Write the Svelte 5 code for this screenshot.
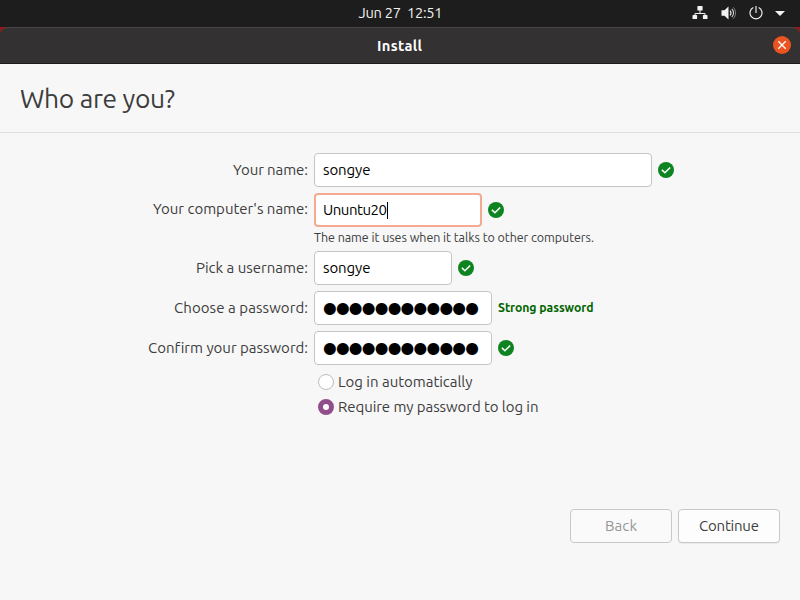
<script>
  const masked = '●'.repeat(12);
  const rows = [
    { label: 'Your name:', lw: 75, value: 'songye', vw: 47.5, width: 338, check: true },
    { label: "Your computer's name:", lw: 155, value: 'Ununtu20', vw: 64, width: 168, check: true, focus: true,
      hint: 'The name it uses when it talks to other computers.' },
    { label: 'Pick a username:', lw: 112, value: 'songye', vw: 47.5, width: 138, check: true },
    { label: 'Choose a password:', lw: 134, value: masked, vw: 156, width: 178, secret: true, strength: 'Strong password' },
    { label: 'Confirm your password:', lw: 159.5, value: masked, vw: 156, width: 178, secret: true, check: true }
  ];
  let login = $state('require');

  // Tracks the text so that it spans the given number of pixels.
  function fit(node, width) {
    const gap = (width - node.getBoundingClientRect().width) / (node.textContent.length - 1);
    node.style.letterSpacing = `${gap}px`;
    node.style.marginRight = `${-gap}px`;
  }
</script>

<div class="screen">
  <header class="panel">
    <time class="t" use:fit={85}>Jun 27&nbsp; 12:51</time>
    <div class="tray">
      <svg class="net" width="16" height="14" viewBox="0 0 16 14">
        <path d="M8 4v4M3 9.500V7.500h10v2" fill="none" stroke="#f2f2f2" stroke-width="1" />
        <path d="M6 0h4a.6.6 0 0 1 .6.6v3.300a.6.6 0 0 1-.6.6H6a.6.6 0 0 1-.6-.6V.6A.6.6 0 0 1 6 0zM1.100 9h3.400a.6.6 0 0 1 .6.6v2.900a.6.6 0 0 1-.6.6H1.100a.6.6 0 0 1-.6-.6V9.600a.6.6 0 0 1 .6-.6zM11.500 9h3.400a.6.6 0 0 1 .6.6v2.900a.6.6 0 0 1-.6.6h-3.400a.6.6 0 0 1-.6-.6V9.600a.6.6 0 0 1 .6-.6z" fill="#f2f2f2" />
      </svg>
      <svg class="vol" width="16" height="14" viewBox="0 0 16 14">
        <path d="M.5 4.300h3L7.500.500v13L3.500 9.700h-3z" fill="#f2f2f2" />
        <path d="M9 4.600c1.300 1.300 1.300 3.500 0 4.800" fill="none" stroke="#f2f2f2" stroke-width="1.200" />
        <path d="M10.800 2.800c2.300 2.300 2.300 6.100 0 8.400" fill="none" stroke="#d0d0d0" stroke-width="1.100" />
        <path d="M12.300 1.300c3 3.300 3 8.100 0 11.400" fill="none" stroke="#888" stroke-width=".9" />
      </svg>
      <svg class="power" width="14" height="14" viewBox="0 0 14 14">
        <path d="M4.300 1.500a6 6 0 1 0 5.400 0M7 0v7" fill="none" stroke="#f2f2f2" stroke-width="1.150" />
      </svg>
      <svg class="arrow" width="10" height="5" viewBox="0 0 10 5"><path d="M0 0h10L5 5z" fill="#f2f2f2" /></svg>
    </div>
  </header>

  <div class="titleback">
    <div class="titlebar">
      <strong class="t" use:fit={45}>Install</strong>
      <button class="close" aria-label="Close">
        <svg width="18" height="18" viewBox="0 0 18 18">
          <circle cx="9" cy="9" r="9" fill="#e95420" />
          <path d="M5.300 5.300l7.400 7.400M12.700 5.300l-7.400 7.400" stroke="#fff" stroke-width="1.300" />
        </svg>
      </button>
    </div>
  </div>

  <div class="heading"><h1 class="t" use:fit={155}>Who are you?</h1></div>

  <main>
    {#each rows as row}
      <div class="row" class:active={row.focus}>
        <span class="label"><span class="t" use:fit={row.lw}>{row.label}</span></span>
        <div class="entry" class:focus={row.focus} style:width="{row.width}px">
          <span class="t" class:secret={row.secret} use:fit={row.vw}>{row.value}</span>
          {#if row.focus}<i class="caret"></i>{/if}
        </div>
        {#if row.check}
          <svg class="check" width="16" height="16" viewBox="0 0 16 16">
            <circle cx="8" cy="8" r="8" fill="#0e8420" />
            <path d="M3.900 7.900l3 2.900 5.300-5.300" fill="none" stroke="#fff" stroke-width="1.500" />
          </svg>
        {/if}
        {#if row.strength}<strong class="strength t" use:fit={95.5}>{row.strength}</strong>{/if}
      </div>
      {#if row.hint}<div class="hint"><span class="t" use:fit={280}>{row.hint}</span></div>{/if}
    {/each}

    <div class="choices">
      <button class="choice" onclick={() => (login = 'auto')}>
        <i class="radio" class:on={login === 'auto'}></i><span class="t" use:fit={134.5}>Log in automatically</span>
      </button>
      <button class="choice" onclick={() => (login = 'require')}>
        <i class="radio" class:on={login === 'require'}></i><span class="t" use:fit={200.5}>Require my password to log in</span>
      </button>
    </div>
  </main>

  <footer>
    <button class="btn" disabled><span class="t" use:fit={32}>Back</span></button>
    <button class="btn"><span class="t" use:fit={60}>Continue</span></button>
  </footer>
</div>

<style>
  :global(body) { margin: 0; }
  * { box-sizing: border-box; }
  .screen {
    width: 800px; height: 600px; overflow: hidden;
    display: flex; flex-direction: column;
    background: #f7f7f7; color: #3d3d3d;
    font: 15px/18px Ubuntu, "Noto Sans", sans-serif;
  }
  .t { display: inline-block; white-space: pre; flex: none; }
  button { font: inherit; color: inherit; border: 0; padding: 0; margin: 0; background: none; }
  svg { display: block; flex: none; }

  .panel {
    height: 27px; padding-bottom: 1px; background: #1d1d1d; color: #f2f2f2;
    display: grid; grid-template-columns: 1fr auto 1fr; align-items: center;
  }
  .panel time { grid-column: 2; font-size: 14.667px; padding-left: 1px; }
  .tray { display: flex; align-items: center; justify-content: flex-end; padding-right: 15px; }
  .vol { margin-left: 13px; }
  .power { margin-left: 12px; }
  .arrow { margin: 1px 0 0 12px; }

  .titleback { height: 37px; background: #a01010; flex: none; }
  .titlebar {
    height: 37px; background: #333132; color: #fff;
    border-top: 1px solid #484647; border-bottom: 1px solid #1d1b1c;
    border-radius: 7px 7px 0 0;
    display: grid; grid-template-columns: 1fr auto 1fr; align-items: center;
  }
  .titlebar strong { grid-column: 2; font-size: 14.667px; margin-left: -1px; }
  .close { justify-self: end; margin: 0 9px 1px 0; }

  .heading { height: 69px; flex: none; border-bottom: 1px solid #dedede; padding: 16px 20px 0; }
  h1 { margin: 0; font-size: 26.400px; line-height: 36px; font-weight: 400; }

  main { padding-top: 20px; flex: 1; }
  .row { display: flex; align-items: center; gap: 6px; height: 34px; margin-bottom: 6px; }
  .label { width: 308px; display: flex; justify-content: flex-end; }
  .active .label { padding-bottom: 2px; }
  .entry {
    height: 34px; border: 1px solid #c4c4c4; border-radius: 4px; background: #fff; color: #000;
    display: flex; align-items: center; padding-left: 8px; flex: none;
  }
  .entry.focus { border: 2px solid #f4aa90; padding-left: 7px; }
  .secret { font-family: "DejaVu Sans", sans-serif; font-size: 15.700px; }
  .caret { width: 1px; height: 17px; background: #000; }
  .strength { color: #006400; font-size: 12.222px; }
  .hint { height: 18px; margin: -5px 0 5px 314px; font-size: 12.500px; line-height: 18px; }

  .choices { padding: 0 0 0 318px; }
  .choice { display: flex; align-items: center; gap: 4px; height: 22px; margin-bottom: 3px; text-align: left; }
  .radio { width: 16px; height: 16px; border-radius: 50%; border: 1px solid #bdbdbd; background: #fff; flex: none; }
  .radio.on { border: 5.500px solid #924d8b; }

  footer { display: flex; justify-content: flex-end; gap: 6px; padding: 0 20px 57px; }
  .btn {
    width: 102px; height: 34px; border: 1px solid #c8c8c8; border-radius: 4px; background: #fdfdfd;
    display: flex; align-items: center; justify-content: center;
    box-shadow: 0 1px 1px rgba(0, 0, 0, .06);
  }
  .btn:disabled { color: #979797; background: #fafafa; box-shadow: none; }
</style>
